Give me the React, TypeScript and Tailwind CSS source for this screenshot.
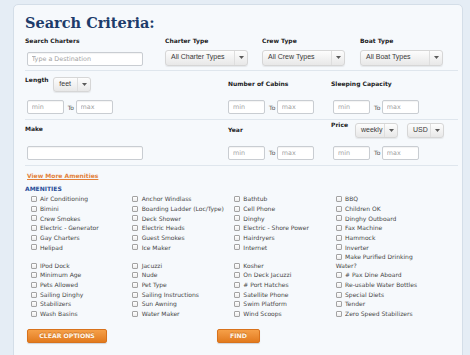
import React from "react";

const amenities = [
    "Air Conditioning", "Anchor Windlass", "Bathtub", "BBQ",
    "Bimini", "Boarding Ladder (Loc/Type)", "Cell Phone", "Children OK",
    "Crew Smokes", "Deck Shower", "Dinghy", "Dinghy Outboard",
    "Electric - Generator", "Electric Heads", "Electric - Shore Power", "Fax Machine",
    "Gay Charters", "Guest Smokes", "Hairdryers", "Hammock",
    "Helipad", "Ice Maker", "Internet", "Inverter",
    "IPod Dock", "Jacuzzi", "Kosher", "Make Purified Drinking Water?",
    "Minimum Age", "Nude", "On Deck Jacuzzi", "# Pax Dine Aboard",
    "Pets Allowed", "Pet Type", "# Port Hatches", "Re-usable Water Bottles",
    "Sailing Dinghy", "Sailing Instructions", "Satellite Phone", "Special Diets",
    "Stabilizers", "Sun Awning", "Swim Platform", "Tender",
    "Wash Basins", "Water Maker", "Wind Scoops", "Zero Speed Stabilizers",
];

const Label: React.FC<{ children: React.ReactNode; className?: string }> = ({ children, className = "" }) => (
    <div className={`h-[10px] text-[6px] leading-[10px] font-bold whitespace-nowrap text-[#1c1c1c] ${className}`}>
        {children}
    </div>
);

const SelectBox: React.FC<{ value: string; className?: string }> = ({ value, className = "" }) => (
    <div className={`flex items-stretch rounded-[3px] border border-[#d6d6d6] bg-linear-to-b from-[#fdfdfd] to-[#e8e8e8] shadow-[0_1px_1px_rgba(0,0,0,0.07)] ${className}`}>
        <span className="flex flex-1 items-center pl-[5px] font-['Liberation_Sans',Arial,sans-serif] text-[7px] whitespace-nowrap text-[#3a3a3a]">
            {value}
        </span>
        <span className="flex w-[13px] items-center justify-center border-l border-[#dedede]">
            <svg width="5" height="3" viewBox="0 0 5 3">
                <path d="M0 0h5L2.5 3z" fill="#5a5a5a" />
            </svg>
        </span>
    </div>
);

const TextBox: React.FC<{ placeholder?: string; className?: string }> = ({ placeholder, className = "" }) => (
    <input
        placeholder={placeholder}
        className={`block h-[14px] rounded-[2px] border border-[#c9cdd2] bg-white pl-[4px] text-[6.4px] text-[#333] shadow-[inset_0_1px_1px_rgba(0,0,0,0.05)] outline-none placeholder:text-[#a3a3a3] ${className}`}
    />
);

const Range: React.FC<{ className?: string }> = ({ className = "" }) => (
    <div className={`flex items-center ${className}`}>
        <TextBox placeholder="min" className="w-[37px]" />
        <span className="ml-[4px] mr-[1.5px] text-[6px] text-[#555]">To</span>
        <TextBox placeholder="max" className="w-[37px]" />
    </div>
);

const OrangeButton: React.FC<{ children: React.ReactNode; className?: string }> = ({ children, className = "" }) => (
    <button className={`flex h-[14px] items-center justify-center rounded-[2px] border border-[#d8721c] bg-linear-to-b from-[#f5a048] to-[#e27a1c] text-[6.2px] font-bold text-[#fff6ea] [text-shadow:0_-1px_0_rgba(150,70,0,0.45)] shadow-[0_1px_1px_rgba(0,0,0,0.15)] ${className}`}>
        {children}
    </button>
);

export default function App() {
    return (
        <div className="h-[355px] overflow-hidden bg-[#e5edf5] pt-[4px] pr-[7px] pl-[13px] font-['DejaVu_Sans',Verdana,sans-serif]">
            <div className="h-[370px] rounded-t-[5px] border border-[#d4dee8] bg-[#f6f9fc] pr-[4px] pl-[11px]">
                <h1 className="pt-[10px] font-['DejaVu_Serif',Georgia,serif] text-[14.5px] leading-[15px] font-bold text-[#1d3c6b]">
                    Search Criteria:
                </h1>

                <div className="mt-[6px] flex">
                    <div className="w-[140px]">
                        <Label>Search Charters</Label>
                        <div className="mt-[3.5px] flex h-[16px] items-end">
                            <TextBox placeholder="Type a Destination" className="ml-[1.7px] w-[116px]" />
                        </div>
                    </div>
                    <div className="w-[97px]">
                        <Label>Charter Type</Label>
                        <div className="mt-[3.5px] flex h-[16px] items-end">
                            <SelectBox value="All Charter Types" className="h-[16px] w-[83px]" />
                        </div>
                    </div>
                    <div className="w-[98px]">
                        <Label>Crew Type</Label>
                        <div className="mt-[3.5px] flex h-[16px] items-end">
                            <SelectBox value="All Crew Types" className="h-[16px] w-[83px]" />
                        </div>
                    </div>
                    <div>
                        <Label>Boat Type</Label>
                        <div className="mt-[3.5px] flex h-[16px] items-end">
                            <SelectBox value="All Boat Types" className="h-[16px] w-[83px]" />
                        </div>
                    </div>
                </div>

                <div className="mt-[4.5px] border-t border-[#dfe6ed]" />

                <div className="flex">
                    <div className="w-[203px]">
                        <div className="flex h-[29px] items-start">
                            <Label className="mt-[3.5px] w-[28.3px]">Length</Label>
                            <SelectBox value="feet" className="mt-[5.5px] h-[15px] w-[38px]" />
                        </div>
                        <Range className="ml-[1.7px]" />
                    </div>
                    <div className="w-[103px]">
                        <div className="h-[29px] pt-[7.5px]">
                            <Label>Number of Cabins</Label>
                        </div>
                        <Range />
                    </div>
                    <div>
                        <div className="h-[29px] pt-[7.5px]">
                            <Label>Sleeping Capacity</Label>
                        </div>
                        <Range className="ml-[2px]" />
                    </div>
                </div>

                <div className="mt-[4.5px] border-t border-[#dfe6ed]" />

                <div className="flex">
                    <div className="w-[203px]">
                        <div className="h-[26px] pt-[4.7px]">
                            <Label>Make</Label>
                        </div>
                        <TextBox className="ml-[1.7px] w-[116px]" />
                    </div>
                    <div className="w-[103px]">
                        <div className="h-[26px] pt-[5px]">
                            <Label>Year</Label>
                        </div>
                        <Range />
                    </div>
                    <div>
                        <div className="flex h-[26px] items-start">
                            <Label className="w-[24px]">Price</Label>
                            <SelectBox value="weekly" className="mt-[3px] h-[15px] w-[43px]" />
                            <SelectBox value="USD" className="mt-[3px] ml-[9px] h-[15px] w-[37px]" />
                        </div>
                        <Range className="ml-[2px]" />
                    </div>
                </div>

                <div className="mt-[5px] border-t border-[#dfe6ed]" />

                <a href="#" className="mt-[5px] ml-[2px] block h-[10px] w-fit text-[6px] leading-[10px] font-bold text-[#e3813a] underline">
                    View More Amenities
                </a>
                <div className="mt-[3px] h-[10px] text-[6px] leading-[10px] font-bold text-[#284c98]">AMENITIES</div>

                <div className="mt-[0.7px] pl-[5.7px] text-[6px] leading-[7.7px] text-[#474747]">
                    {amenities.map(name => (
                        <label key={name} className="mr-[5.7px] inline-block w-[96px] align-baseline">
                            <span className="my-[1.85px] mr-[3.3px] inline-block h-[6px] w-[6px] rounded-[1px] border border-[#a3a3a3] bg-linear-to-b from-white to-[#ececec] align-[-2.35px]" />
                            {name}
                        </label>
                    ))}
                </div>

                <div className="mt-[10px] flex">
                    <OrangeButton className="ml-[2px] w-[80px]">CLEAR OPTIONS</OrangeButton>
                    <OrangeButton className="ml-[110px] w-[43px]">FIND</OrangeButton>
                </div>
            </div>
        </div>
    );
}
